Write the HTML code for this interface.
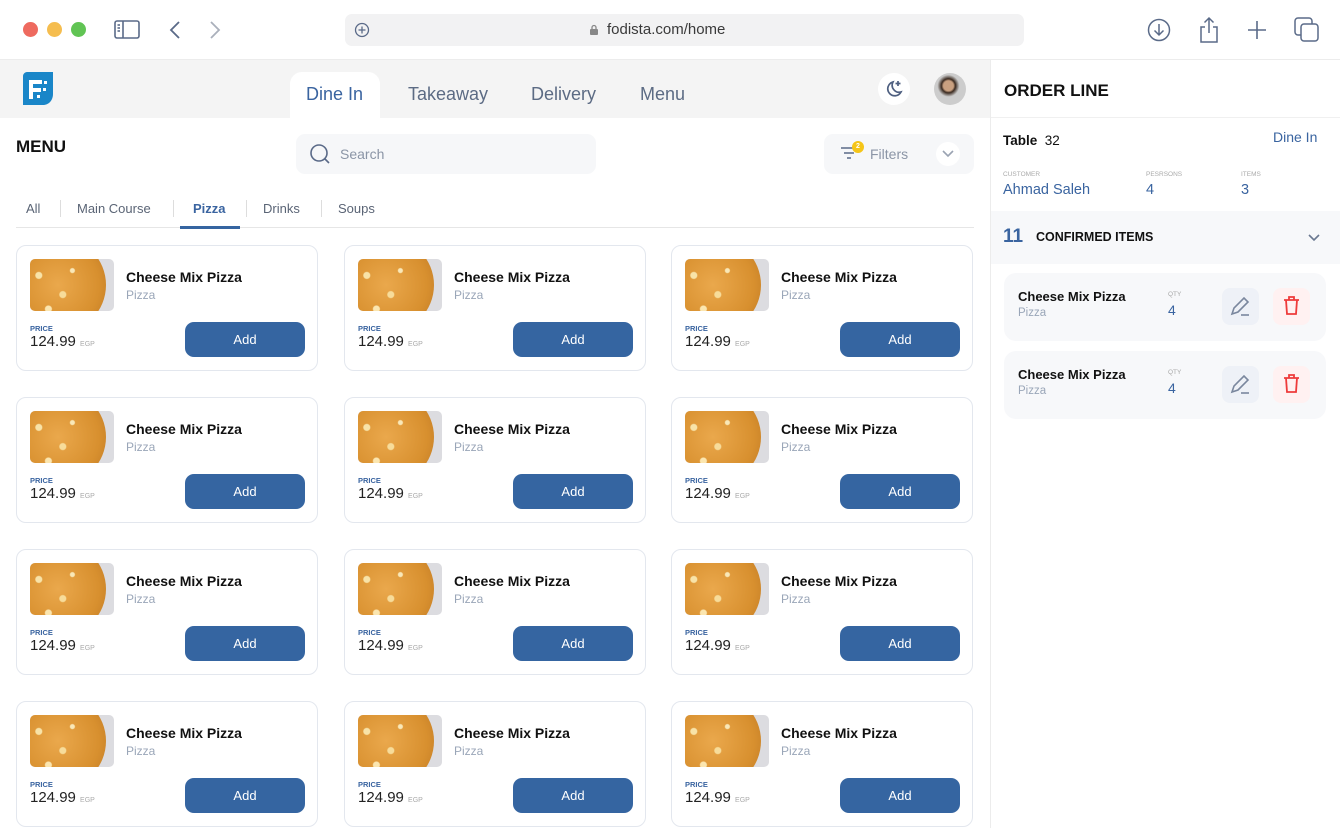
<!DOCTYPE html>
<html><head><meta charset="utf-8"><style>
*{box-sizing:border-box;margin:0;padding:0}
body{width:1340px;height:828px;overflow:hidden;background:#fff;font-family:"Liberation Sans",sans-serif;position:relative}
.abs{position:absolute}
.dot{position:absolute;top:22px;width:15px;height:15px;border-radius:50%}
.card{position:absolute;width:302px;height:126px;border:1.5px solid #e3e7ee;border-radius:10px;background:#fff}
.card .img{position:absolute;left:13px;top:13px;width:84px;height:52px;border-radius:5px;background:#dcdce0;overflow:hidden}
.card .img:before{content:"";position:absolute;left:-20px;top:-22px;width:96px;height:96px;border-radius:50%;background:radial-gradient(circle at 30% 40%,#f8e3a8 0 3px,transparent 4px),radial-gradient(circle at 55% 60%,#f7dc9a 0 3px,transparent 4px),radial-gradient(circle at 65% 35%,#f9e8b8 0 2px,transparent 3px),radial-gradient(circle at 40% 75%,#fbe6b0 0 3px,transparent 4px),radial-gradient(circle,#eaa84c 0,#d8902f 60%,#c07a25 90%,#5a3e26 94%);}
.card .t{position:absolute;left:109px;top:23px;font-weight:bold;font-size:14px;color:#111}
.card .s{position:absolute;left:109px;top:42px;font-size:12px;color:#9aa6b8}
.card .pl{position:absolute;left:13px;top:78px;font-size:7.5px;font-weight:bold;color:#3a64a0}
.card .p{position:absolute;left:13px;top:87px;font-size:15px;color:#222}
.card .p small{font-size:7px;color:#aaa}
.card .b{position:absolute;left:168px;top:76px;width:120px;height:35px;border-radius:9px;background:#3565a1;color:#fff;font-size:13px;text-align:center;line-height:35px}
.tab{position:absolute;top:84px;font-size:18px;color:#5c6b84}
.cat{position:absolute;top:201px;font-size:13px;color:#5a6475}
.oi{position:absolute;left:1004px;width:322px;height:68px;background:#f7f8fa;border-radius:12px}
.oi .n{position:absolute;left:14px;top:16px;font-weight:bold;font-size:13px;color:#111}
.oi .c{position:absolute;left:14px;top:34px;font-size:11.5px;color:#9aa6b8}
.oi .q{position:absolute;left:164px;top:18px;font-size:6.5px;color:#a8a8a8}
.oi .qv{position:absolute;left:164px;top:29px;font-size:14px;color:#3a64a0}
.oi .e{position:absolute;left:218px;top:15px;width:37px;height:37px;border-radius:8px;background:#eef1f7}
.oi .d{position:absolute;left:269px;top:15px;width:37px;height:37px;border-radius:8px;background:#fff1f1}
</style></head><body>
<div class="dot" style="left:23px;background:#ee6a5f"></div>
<div class="dot" style="left:47px;background:#f5bd4f"></div>
<div class="dot" style="left:71px;background:#61c454"></div>
<svg class="abs" style="left:114px;top:20px" width="26" height="20" viewBox="0 0 26 20" fill="none" stroke="#5a6a88" stroke-width="1.6"><rect x="1" y="1" width="24" height="17" rx="2"/><line x1="9" y1="1" x2="9" y2="18"/><line x1="3.5" y1="5" x2="6" y2="5"/><line x1="3.5" y1="8" x2="6" y2="8"/><line x1="3.5" y1="11" x2="6" y2="11"/></svg>
<svg class="abs" style="left:168px;top:20px" width="14" height="20" fill="none" stroke="#5a6a88" stroke-width="1.8"><path d="M11 2L3 10l8 8"/></svg>
<svg class="abs" style="left:208px;top:20px" width="14" height="20" fill="none" stroke="#aab0bb" stroke-width="1.8"><path d="M3 2l8 8-8 8"/></svg>
<div class="abs" style="left:345px;top:14px;width:679px;height:32px;background:#f2f2f3;border-radius:7px"></div>
<svg class="abs" style="left:354px;top:22px" width="16" height="16" fill="none" stroke="#5a6a88" stroke-width="1.3"><circle cx="8" cy="8" r="6.5"/><path d="M8 4.5v7M4.5 8h7"/></svg>
<svg class="abs" style="left:589px;top:24px" width="10" height="12" fill="#888"><rect x="1" y="5" width="8" height="6" rx="1"/><path d="M3 5V3.5a2 2 0 014 0V5" stroke="#888" fill="none" stroke-width="1.3"/></svg>
<div class="abs" style="left:607px;top:21px;font-size:15px;color:#3a3a3a">fodista.com/home</div>
<svg class="abs" style="left:1147px;top:18px" width="24" height="24" fill="none" stroke="#5a6a88" stroke-width="1.5"><circle cx="12" cy="12" r="10.5"/><path d="M12 6v11M7.5 12.5L12 17l4.5-4.5"/></svg>
<svg class="abs" style="left:1198px;top:16px" width="22" height="28" fill="none" stroke="#5a6a88" stroke-width="1.5"><path d="M11 2v15M6.5 6.5L11 2l4.5 4.5M7 11H3v15h16V11h-4"/></svg>
<svg class="abs" style="left:1246px;top:19px" width="22" height="22" stroke="#5a6a88" stroke-width="1.6"><path d="M11 2v18M2 11h18"/></svg>
<svg class="abs" style="left:1294px;top:17px" width="26" height="26" fill="none" stroke="#5a6a88" stroke-width="1.5"><rect x="1" y="1" width="17" height="17" rx="3"/><rect x="7" y="7" width="17" height="17" rx="3" fill="#fff"/></svg>
<div class="abs" style="left:0;top:59px;width:1340px;height:1px;background:#ececec"></div>

<div class="abs" style="left:0;top:60px;width:990px;height:58px;background:#f4f4f4"></div>
<div class="abs" style="left:990px;top:60px;width:1px;height:768px;background:#ececec"></div>
<svg class="abs" style="left:23px;top:72px" width="30" height="33" viewBox="0 0 30 33"><path d="M4 0h26v22c0 6-4 11-10 11H0V4c0-2 2-4 4-4z" fill="#1a86c8"/><path d="M6 8h13v4H10v4h8v4h-8v7H6z" fill="#fff"/><rect x="21" y="9" width="3" height="3" fill="#fff"/><rect x="20" y="16" width="3" height="3" fill="#fff"/><rect x="14" y="23" width="3" height="3" fill="#fff"/></svg>
<div class="abs" style="left:290px;top:72px;width:90px;height:46px;background:#fff;border-radius:12px 12px 0 0"></div>
<div class="tab" style="left:306px;color:#3a64a0">Dine In</div>
<div class="tab" style="left:408px">Takeaway</div>
<div class="tab" style="left:531px">Delivery</div>
<div class="tab" style="left:640px">Menu</div>
<div class="abs" style="left:878px;top:73px;width:32px;height:32px;border-radius:50%;background:#fff"></div>
<svg class="abs" style="left:884px;top:79px" width="20" height="20" fill="none" stroke="#4e5f80" stroke-width="1.7"><path d="M9 3a7 7 0 108 10A7 7 0 019 3z"/><path d="M14 2v5M11.5 4.5h5"/></svg>
<div class="abs" style="left:934px;top:73px;width:32px;height:32px;border-radius:50%;background:radial-gradient(circle at 45% 40%,#c9a080 0 5px,#3a2a20 7px,#ccc 11px)"></div>

<div class="abs" style="left:16px;top:137px;font-weight:bold;font-size:17px;color:#111">MENU</div>
<div class="abs" style="left:296px;top:134px;width:300px;height:40px;border-radius:9px;background:#f6f7f9"></div>
<svg class="abs" style="left:309px;top:143px" width="22" height="22" fill="none" stroke="#5a6a88" stroke-width="1.6"><circle cx="10" cy="10" r="8"/><path d="M16 16l4 4"/></svg>
<div class="abs" style="left:340px;top:146px;font-size:14px;color:#8b95a6">Search</div>
<div class="abs" style="left:824px;top:134px;width:150px;height:40px;border-radius:9px;background:#f6f7f9"></div>
<svg class="abs" style="left:840px;top:145px" width="18" height="16" stroke="#5a6a88" stroke-width="1.5"><path d="M1 3h16M4 8h10M7 13h4"/></svg>
<div class="abs" style="left:852px;top:141px;width:12px;height:12px;border-radius:50%;background:#f5c518;font-size:7px;color:#fff;text-align:center;line-height:12px;font-weight:bold">2</div>
<div class="abs" style="left:870px;top:146px;font-size:14px;color:#8b95a6">Filters</div>
<div class="abs" style="left:936px;top:142px;width:24px;height:24px;border-radius:50%;background:#fff"></div>
<svg class="abs" style="left:941px;top:149px" width="14" height="10" fill="none" stroke="#9aa3b2" stroke-width="1.6"><path d="M2 2l5 5 5-5"/></svg>

<div class="cat" style="left:26px">All</div>
<div class="cat" style="left:77px">Main Course</div>
<div class="cat" style="left:193px;color:#3a64a0;font-weight:bold">Pizza</div>
<div class="cat" style="left:263px">Drinks</div>
<div class="cat" style="left:338px">Soups</div>
<div class="abs" style="left:60px;top:200px;width:1px;height:17px;background:#ddd"></div>
<div class="abs" style="left:173px;top:200px;width:1px;height:17px;background:#ddd"></div>
<div class="abs" style="left:246px;top:200px;width:1px;height:17px;background:#ddd"></div>
<div class="abs" style="left:321px;top:200px;width:1px;height:17px;background:#ddd"></div>
<div class="abs" style="left:16px;top:227px;width:958px;height:1px;background:#e6e6e6"></div>
<div class="abs" style="left:180px;top:226px;width:60px;height:3px;background:#3565a1"></div>

<div id="cards"></div>

<div class="abs" style="left:1004px;top:81px;font-weight:bold;font-size:17px;color:#111">ORDER LINE</div>
<div class="abs" style="left:991px;top:117px;width:349px;height:1px;background:#f0f0f0"></div>
<div class="abs" style="left:1003px;top:133px;font-size:13.5px;color:#111"><b>Table</b>&nbsp; 32</div>
<div class="abs" style="left:1273px;top:129px;font-size:14px;color:#3a64a0">Dine In</div>
<div class="abs" style="left:1003px;top:171px;font-size:6.5px;color:#aaa">CUSTOMER</div>
<div class="abs" style="left:1146px;top:171px;font-size:6.5px;color:#aaa">PESRSONS</div>
<div class="abs" style="left:1241px;top:171px;font-size:6.5px;color:#aaa">ITEMS</div>
<div class="abs" style="left:1003px;top:182px;font-size:14.5px;color:#3a64a0">Ahmad Saleh</div>
<div class="abs" style="left:1146px;top:182px;font-size:14.5px;color:#3a64a0">4</div>
<div class="abs" style="left:1241px;top:182px;font-size:14.5px;color:#3a64a0">3</div>
<div class="abs" style="left:991px;top:211px;width:349px;height:53px;background:#f7f8fa"></div>
<div class="abs" style="left:1003px;top:226px;font-size:19px;font-weight:bold;color:#3a64a0">11</div>
<div class="abs" style="left:1036px;top:230px;font-size:12.5px;font-weight:bold;color:#111">CONFIRMED ITEMS</div>
<svg class="abs" style="left:1307px;top:233px" width="14" height="10" fill="none" stroke="#6a7890" stroke-width="1.6"><path d="M2 2l5 5 5-5"/></svg>
<div id="ois"></div>
<script>
var h='';
var xs=[16,344,671],ys=[245,397,549,701];
ys.forEach(function(y){xs.forEach(function(x){h+='<div class="card" style="left:'+x+'px;top:'+y+'px"><div class="img"></div><div class="t">Cheese Mix Pizza</div><div class="s">Pizza</div><div class="pl">PRICE</div><div class="p">124.99 <small>EGP</small></div><div class="b">Add</div></div>'})});
document.getElementById('cards').innerHTML=h;
var o='';[273,351].forEach(function(y){o+='<div class="oi" style="top:'+y+'px"><div class="n">Cheese Mix Pizza</div><div class="c">Pizza</div><div class="q">QTY</div><div class="qv">4</div><div class="e"><svg width="37" height="37" fill="none" stroke="#7a879e" stroke-width="1.6"><path d="M10 26l2-6 10-10 4 4-10 10z"/><path d="M19 27h8"/></svg></div><div class="d"><svg width="37" height="37" fill="none" stroke="#ee3b3b" stroke-width="1.8"><path d="M11 12h15M16 12V9h5v3M13 12l1 14h9l1-14"/></svg></div></div>'});
document.getElementById('ois').innerHTML=o;
</script>
</body></html>
